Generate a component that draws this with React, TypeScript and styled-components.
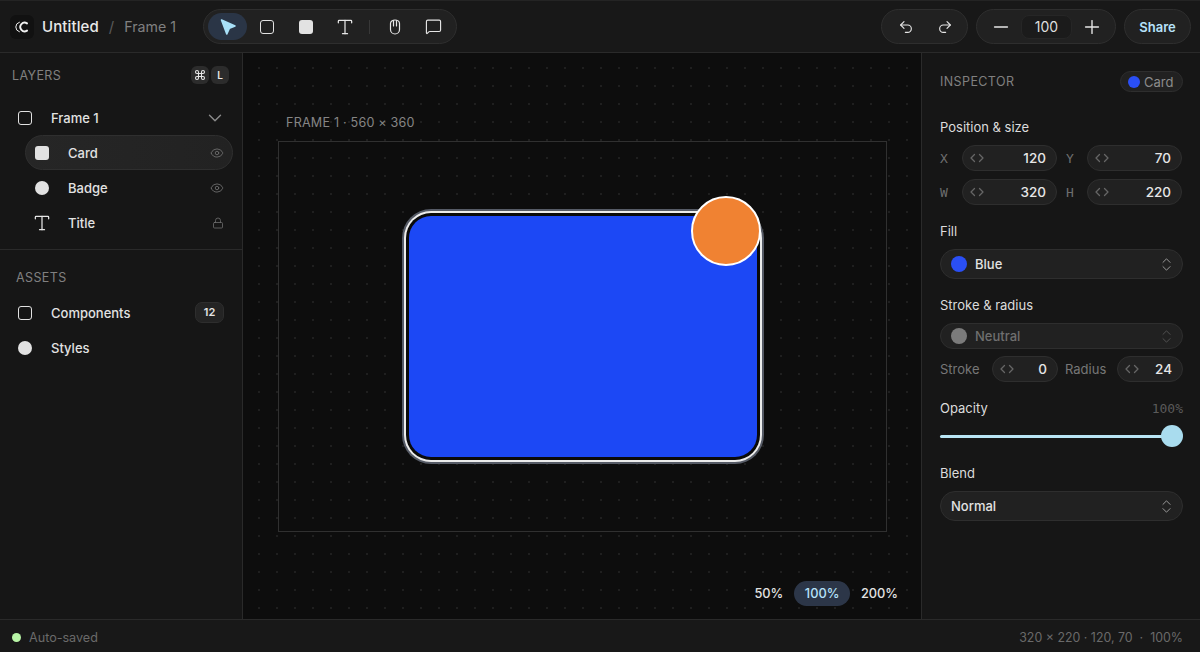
import styled, { createGlobalStyle } from 'styled-components';
import {
    ChevronDown,
    ChevronsUpDown,
    Command,
    Eye,
    Lock,
    MessageSquare,
    Minus,
    Plus,
    Redo2,
    Type,
    Undo2,
} from 'lucide-react';

const GlobalStyle = createGlobalStyle`
    html, body {
        margin: 0;
        height: 100%;
        background: #161616;
        overflow: hidden;
    }
    * {
        box-sizing: border-box;
    }
    #root {
        height: 652px;
        font-family: Inter, "Liberation Sans", sans-serif;
        color: #e6e6e6;
    }
`;

const StepArrows = () => (
    <svg width="14" height="10" viewBox="0 0 14 10" fill="none" stroke="#666666" strokeWidth="1.3" strokeLinecap="round" strokeLinejoin="round">
        <path d="M4.5 1.5 1 5l3.5 3.5" />
        <path d="M9.5 1.5 13 5 9.5 8.5" />
    </svg>
);

const Cursor = () => (
    <svg width="18" height="18" viewBox="0 0 18 18" fill="#a8e0f8" stroke="#a8e0f8" strokeWidth="1.6" strokeLinejoin="round">
        <path d="M2.5 2 16 8 10.4 10.2 7.8 16Z" />
    </svg>
);

const Logo = () => (
    <svg width="14" height="12" viewBox="0 0 14 12" fill="none" stroke="#f0f0f0" strokeLinecap="round">
        <path d="M4.4 1.2A5 5 0 0 0 4.4 10.8" strokeWidth="1" />
        <path d="M12 2.4A4.3 4.3 0 1 0 12 9.6" strokeWidth="1.9" />
    </svg>
);

const HandTool = () => (
    <svg width="12" height="16" viewBox="0 0 12 16" fill="none" stroke="#e6e6e6" strokeWidth="1.2" strokeLinecap="round" strokeLinejoin="round">
        <path d="M1.5 7V4.5C1.5 2.5 3.5 1 6 1s4.500 1.500 4.500 3.500v6c0 2.500-2 4.500-4.500 4.500s-4.500-2-4.500-4.500Z" />
        <path d="M4.500 1.500V7M7.500 1.500V7" />
    </svg>
);

const App = () => {
    return (
        <Page>
            <GlobalStyle />
            <TopBar>
                <Brand>
                    <LogoBox><Logo /></LogoBox>
                    <DocTitle>Untitled</DocTitle>
                    <Slash>/</Slash>
                    <FrameName>Frame 1</FrameName>
                </Brand>
                <Pill>
                    <ToolButton $active><Cursor /></ToolButton>
                    <ToolButton><OutlineSquare /></ToolButton>
                    <ToolButton><SolidSquare /></ToolButton>
                    <ToolButton><Type size={20} strokeWidth={1.5} /></ToolButton>
                    <ToolDivider />
                    <ToolButton><HandTool /></ToolButton>
                    <ToolButton><MessageSquare size={17} strokeWidth={1.6} /></ToolButton>
                </Pill>
                <RightGroup>
                    <Pill>
                        <ToolButton><Undo2 size={16} strokeWidth={1.7} /></ToolButton>
                        <ToolButton><Redo2 size={16} strokeWidth={1.7} /></ToolButton>
                    </Pill>
                    <Pill>
                        <ZoomButton><Minus size={22} strokeWidth={1.5} /></ZoomButton>
                        <ZoomInput>100</ZoomInput>
                        <ZoomButton><Plus size={22} strokeWidth={1.5} /></ZoomButton>
                    </Pill>
                    <ShareButton>Share</ShareButton>
                </RightGroup>
            </TopBar>

            <Main>
                <LeftPanel>
                    <LayersSection>
                        <LayersHeader>
                            <PanelLabel>LAYERS</PanelLabel>
                            <Keys>
                                <Key><Command size={12} strokeWidth={2.2} /></Key>
                                <Key>L</Key>
                            </Keys>
                        </LayersHeader>
                        <Row>
                            <RowIcon><OutlineSquare /></RowIcon>
                            <RowName>Frame 1</RowName>
                            <FrameChevron size={22} strokeWidth={1.5} color="#8c8c8c" />
                        </Row>
                        <Row $nested $selected>
                            <RowIcon><SolidSquare /></RowIcon>
                            <RowName>Card</RowName>
                            <Eye size={14} strokeWidth={1.5} color="#6e6e6e" />
                        </Row>
                        <Row $nested>
                            <RowIcon><SolidDot /></RowIcon>
                            <RowName>Badge</RowName>
                            <Eye size={14} strokeWidth={1.5} color="#6e6e6e" />
                        </Row>
                        <Row $nested>
                            <RowIcon><Type size={20} strokeWidth={1.5} /></RowIcon>
                            <RowName>Title</RowName>
                            <Lock size={12} strokeWidth={1.6} color="#6e6e6e" />
                        </Row>
                    </LayersSection>
                    <AssetsSection>
                        <AssetsLabel>ASSETS</AssetsLabel>
                        <Row>
                            <RowIcon><OutlineSquare /></RowIcon>
                            <RowName>Components</RowName>
                            <CountBadge>12</CountBadge>
                        </Row>
                        <Row>
                            <RowIcon><SolidDot /></RowIcon>
                            <RowName>Styles</RowName>
                        </Row>
                    </AssetsSection>
                </LeftPanel>

                <Canvas>
                    <FrameLabel>FRAME 1 · 560 × 360</FrameLabel>
                    <Frame>
                        <Card>
                            <Badge />
                        </Card>
                    </Frame>
                    <ZoomPresets>
                        <Preset>50%</Preset>
                        <Preset $active>100%</Preset>
                        <Preset>200%</Preset>
                    </ZoomPresets>
                </Canvas>

                <Inspector>
                    <InspectorHeader>
                        <PanelLabel>INSPECTOR</PanelLabel>
                        <Chip><Swatch $color="#2a4ff5" $size={12} />Card</Chip>
                    </InspectorHeader>

                    <FieldLabel>Position &amp; size</FieldLabel>
                    <FieldGrid>
                        <AxisName>X</AxisName>
                        <NumberField><StepArrows /><span>120</span></NumberField>
                        <AxisName>Y</AxisName>
                        <NumberField><StepArrows /><span>70</span></NumberField>
                        <AxisName>W</AxisName>
                        <NumberField><StepArrows /><span>320</span></NumberField>
                        <AxisName>H</AxisName>
                        <NumberField><StepArrows /><span>220</span></NumberField>
                    </FieldGrid>

                    <FieldLabel>Fill</FieldLabel>
                    <Select>
                        <Swatch $color="#2a4ff5" $size={16} />
                        <SelectText>Blue</SelectText>
                        <ChevronsUpDown size={17} strokeWidth={1.4} color="#9a9a9a" />
                    </Select>

                    <FieldLabel>Stroke &amp; radius</FieldLabel>
                    <Select $disabled>
                        <Swatch $color="#a3a3a3" $size={16} />
                        <SelectText>Neutral</SelectText>
                        <ChevronsUpDown size={17} strokeWidth={1.4} color="#9a9a9a" />
                    </Select>
                    <StrokeRow>
                        <MutedText>Stroke</MutedText>
                        <NumberField><StepArrows /><span>0</span></NumberField>
                        <MutedText>Radius</MutedText>
                        <NumberField><StepArrows /><span>24</span></NumberField>
                    </StrokeRow>

                    <OpacityHead>
                        <FieldLabel>Opacity</FieldLabel>
                        <OpacityValue>100%</OpacityValue>
                    </OpacityHead>
                    <Slider>
                        <SliderTrack />
                        <SliderThumb />
                    </Slider>

                    <FieldLabel>Blend</FieldLabel>
                    <Select>
                        <SelectText>Normal</SelectText>
                        <ChevronsUpDown size={17} strokeWidth={1.4} color="#9a9a9a" />
                    </Select>
                </Inspector>
            </Main>

            <StatusBar>
                <SavedState>
                    <SavedDot />
                    Auto-saved
                </SavedState>
                <StatusInfo>320 × 220 · 120, 70 &nbsp;·&nbsp; 100%</StatusInfo>
            </StatusBar>
        </Page>
    );
};

export default App;

// styled-components

const Page = styled.div`
    display: flex;
    flex-direction: column;
    height: 652px;
    background: #161616;
`;

const TopBar = styled.header`
    display: flex;
    align-items: center;
    flex: 0 0 53px;
    padding: 0 9px 0 10px;
    background: #181818;
    border-top: 1px solid #242424;
    border-bottom: 1px solid #2a2a2a;
`;

const Brand = styled.div`
    display: flex;
    align-items: center;
    width: 193px;
`;

const LogoBox = styled.div`
    display: flex;
    align-items: center;
    justify-content: center;
    width: 24px;
    height: 24px;
    margin-right: 8px;
    border-radius: 6px;
    background: #111111;
`;

const DocTitle = styled.span`
    font-size: 15px;
    font-weight: 450;
    letter-spacing: 0.1px;
    color: #e8e8e8;
`;

const Slash = styled.span`
    margin: 0 10px;
    font-size: 15px;
    color: #5a5a5a;
`;

const FrameName = styled.span`
    font-size: 14.2px;
    color: #808080;
`;

const Pill = styled.div`
    display: flex;
    align-items: center;
    height: 35px;
    padding: 0 3px 0 4px;
    border: 1px solid #2e2e2e;
    border-radius: 18px;
    background: #212121;
`;

const ToolButton = styled.div<{ $active?: boolean }>`
    display: flex;
    align-items: center;
    justify-content: center;
    width: 39px;
    height: 27px;
    border-radius: 14px;
    color: #e6e6e6;
    background: ${({ $active }) => ($active ? '#2a3546' : 'transparent')};
`;

const ToolDivider = styled.div`
    width: 1px;
    height: 14px;
    margin: 0 5px;
    background: #383838;
`;

const RightGroup = styled.div`
    display: flex;
    gap: 8px;
    margin-left: auto;
`;

const ZoomButton = styled.div`
    display: flex;
    align-items: center;
    justify-content: center;
    width: 40px;
    color: #e6e6e6;
`;

const ZoomInput = styled.div`
    width: 51px;
    height: 24px;
    border: 1px solid #262626;
    border-radius: 8px;
    background: #1b1b1b;
    font-size: 14px;
    line-height: 22px;
    text-align: center;
    color: #dedede;
`;

const ShareButton = styled.div`
    display: flex;
    align-items: center;
    justify-content: center;
    width: 67px;
    height: 35px;
    border: 1px solid #2e2e2e;
    border-radius: 18px;
    background: #212121;
    font-size: 13px;
    font-weight: 600;
    color: #b6e2fa;
`;

const Main = styled.div`
    display: flex;
    flex: 1;
    min-height: 0;
`;

const LeftPanel = styled.aside`
    flex: 0 0 243px;
    background: #161616;
    border-right: 1px solid #2a2a2a;
`;

const LayersSection = styled.section`
    padding: 12px 0 9px;
    border-bottom: 1px solid #2a2a2a;
`;

const LayersHeader = styled.div`
    display: flex;
    align-items: center;
    justify-content: space-between;
    height: 20px;
    margin-bottom: 15px;
    padding: 0 13px 0 12px;
`;

const PanelLabel = styled.span`
    font-size: 12.5px;
    letter-spacing: 0.4px;
    color: #808080;
`;

const Keys = styled.div`
    display: flex;
    gap: 2px;
`;

const Key = styled.span`
    display: flex;
    align-items: center;
    justify-content: center;
    width: 18px;
    height: 18px;
    border-radius: 6px;
    background: #2c2c2c;
    font-size: 10px;
    font-weight: 600;
    color: #e6e6e6;
`;

const Row = styled.div<{ $nested?: boolean; $selected?: boolean }>`
    display: flex;
    align-items: center;
    height: 35px;
    margin-left: ${({ $nested }) => ($nested ? '25px' : '0')};
    width: ${({ $nested }) => ($nested ? '208px' : '100%')};
    padding: ${({ $nested }) => ($nested ? '0 8px 0 9px' : '0 18px 0 17px')};
    border: 1px solid ${({ $selected }) => ($selected ? '#2f2f2f' : 'transparent')};
    border-radius: 18px;
    background: ${({ $selected }) => ($selected ? 'linear-gradient(90deg, #262626, #222222)' : 'transparent')};

    & > span:first-child {
        margin-right: 19px;
    }
`;

const RowIcon = styled.span`
    display: flex;
    align-items: center;
    justify-content: center;
    flex: 0 0 14px;
    width: 14px;
    color: #e6e6e6;

    & > svg {
        flex: none;
        margin: 0 -3px;
    }
`;

const RowName = styled.span`
    flex: 1;
    font-size: 13px;
    font-weight: 500;
    color: #e2e2e2;
`;

const FrameChevron = styled(ChevronDown)`
    margin-right: -3px;
`;

const OutlineSquare = styled.span`
    display: block;
    flex: none;
    width: 14px;
    height: 14px;
    border: 1.5px solid #e2e2e2;
    border-radius: 3px;
`;

const SolidSquare = styled.span`
    display: block;
    flex: none;
    width: 14px;
    height: 14px;
    border-radius: 3px;
    background: #e2e2e2;
`;

const SolidDot = styled.span`
    display: block;
    flex: none;
    width: 14px;
    height: 14px;
    border-radius: 50%;
    background: #e2e2e2;
`;

const AssetsSection = styled.section`
    padding-top: 19px;
`;

const AssetsLabel = styled(PanelLabel)`
    display: block;
    height: 26px;
    padding-left: 16px;
    line-height: 18px;
`;

const CountBadge = styled.span`
    width: 29px;
    height: 21px;
    margin-right: -1px;
    border: 1px solid #2e2e2e;
    border-radius: 7px;
    background: #242424;
    font-size: 11px;
    font-weight: 600;
    line-height: 19px;
    text-align: center;
    color: #e6e6e6;
`;

const Canvas = styled.main`
    position: relative;
    flex: 1;
    padding: 61px 34px 0 35px;
    background-color: #0d0d0d;
    background-image: radial-gradient(circle, #1f1f1f 0.8px, transparent 1px);
    background-size: 18px 18px;
    background-position: 7px 6px;
`;

const FrameLabel = styled.div`
    height: 18px;
    margin: 0 0 9px 8px;
    font-size: 12.6px;
    line-height: 18px;
    letter-spacing: 0.2px;
    color: #858585;
`;

const Frame = styled.div`
    display: flex;
    align-items: center;
    justify-content: center;
    height: 391px;
    border: 1px solid #303030;
`;

const Card = styled.div`
    position: relative;
    width: 348px;
    height: 241px;
    border-radius: 22px;
    background: #1c48f5;
    box-shadow: 0 0 0 3px #0a0a0a, 0 0 0 5px #ececec, 0 0 0 7px #565b66;
`;

const Badge = styled.div`
    position: absolute;
    top: -20px;
    right: -4px;
    width: 70px;
    height: 70px;
    border: 2px solid #ffffff;
    border-radius: 50%;
    background: #f08232;
`;

const ZoomPresets = styled.div`
    position: absolute;
    right: 17px;
    bottom: 13px;
    display: flex;
    align-items: center;
`;

const Preset = styled.span<{ $active?: boolean }>`
    height: 25px;
    padding: 0 ${({ $active }) => ($active ? '10.5px' : '6px')};
    margin: 0 ${({ $active }) => ($active ? '5px' : '0')};
    border-radius: 13px;
    background: ${({ $active }) => ($active ? '#2c3648' : 'transparent')};
    font-size: 12.8px;
    font-weight: 500;
    line-height: 25px;
    color: ${({ $active }) => ($active ? '#b6e2fa' : '#e2e2e2')};
`;

const Inspector = styled.aside`
    flex: 0 0 278px;
    padding: 0 17px 0 18px;
    background: #161616;
    border-left: 1px solid #2a2a2a;
`;

const InspectorHeader = styled.div`
    display: flex;
    align-items: center;
    justify-content: space-between;
    height: 21px;
    margin: 18px 0 26px;
`;

const Chip = styled.div`
    display: flex;
    align-items: center;
    gap: 4px;
    width: 63px;
    height: 21px;
    padding-left: 7px;
    border: 1px solid #2e2e2e;
    border-radius: 11px;
    background: #212121;
    font-size: 13px;
    color: #8c8c8c;
`;

const Swatch = styled.span<{ $color: string; $size: number }>`
    flex: none;
    width: ${({ $size }) => $size}px;
    height: ${({ $size }) => $size}px;
    border-radius: 50%;
    background: ${({ $color }) => $color};
`;

const FieldLabel = styled.div`
    height: 18px;
    margin: 17px 0 9px;
    font-size: 13px;
    line-height: 18px;
    color: #dcdcdc;
`;

const FieldGrid = styled.div`
    display: grid;
    grid-template-columns: 22px 95px 30px 95px;
    grid-auto-rows: 26px;
    row-gap: 8px;
    align-items: center;
`;

const AxisName = styled.span`
    font-family: "DejaVu Sans Mono", "Liberation Mono", monospace;
    font-size: 13px;
    color: #6e6e6e;

    &:nth-child(4n + 3) {
        padding-left: 9px;
    }
`;

const NumberField = styled.div`
    display: flex;
    align-items: center;
    justify-content: space-between;
    height: 26px;
    padding: 0 10px 0 7px;
    border: 1px solid #2e2e2e;
    border-radius: 13px;
    background: #212121;
    font-size: 13.5px;
    font-weight: 500;
    color: #e6e6e6;
`;

const Select = styled.div<{ $disabled?: boolean }>`
    display: flex;
    align-items: center;
    gap: 8px;
    height: ${({ $disabled }) => ($disabled ? '26px' : '30px')};
    padding: 0 7px 0 10px;
    border: 1px solid #2e2e2e;
    border-radius: 15px;
    background: #212121;
    color: ${({ $disabled }) => ($disabled ? '#6f6f6f' : '#e2e2e2')};

    & > span:first-child {
        opacity: ${({ $disabled }) => ($disabled ? 0.7 : 1)};
    }
    & > svg {
        opacity: ${({ $disabled }) => ($disabled ? 0.4 : 1)};
    }
`;

const SelectText = styled.span`
    flex: 1;
    font-size: 13px;
    font-weight: 500;
`;

const StrokeRow = styled.div`
    display: grid;
    grid-template-columns: 52px 66px 59px 66px;
    align-items: center;
    margin-top: 7px;
`;

const MutedText = styled.span`
    font-size: 13px;
    color: #777777;

    &:nth-child(3) {
        padding-left: 7px;
    }
`;

const OpacityHead = styled.div`
    display: flex;
    align-items: center;
    justify-content: space-between;
`;

const OpacityValue = styled.span`
    margin-top: 8px;
    font-family: "DejaVu Sans Mono", "Liberation Mono", monospace;
    font-size: 13px;
    color: #5a5a5a;
`;

const Slider = styled.div`
    display: flex;
    align-items: center;
    height: 22px;
    margin-top: -1px;
`;

const SliderTrack = styled.div`
    flex: 1;
    height: 3px;
    margin-right: -2px;
    border-radius: 2px;
    background: #b9e6f5;
`;

const SliderThumb = styled.div`
    flex: none;
    width: 22px;
    height: 22px;
    border-radius: 50%;
    background: #a9dcee;
`;

const StatusBar = styled.footer`
    display: flex;
    align-items: center;
    justify-content: space-between;
    flex: 0 0 33px;
    padding: 2px 17px 0 12px;
    background: #181818;
    border-top: 1px solid #2a2a2a;
    font-size: 12.6px;
    color: #6a6a6a;
`;

const SavedState = styled.span`
    display: flex;
    align-items: center;
    gap: 8px;
`;

const SavedDot = styled.span`
    width: 9px;
    height: 9px;
    border-radius: 50%;
    background: #b8f5a6;
`;

const StatusInfo = styled.span`
    font-size: 12.4px;
`;
